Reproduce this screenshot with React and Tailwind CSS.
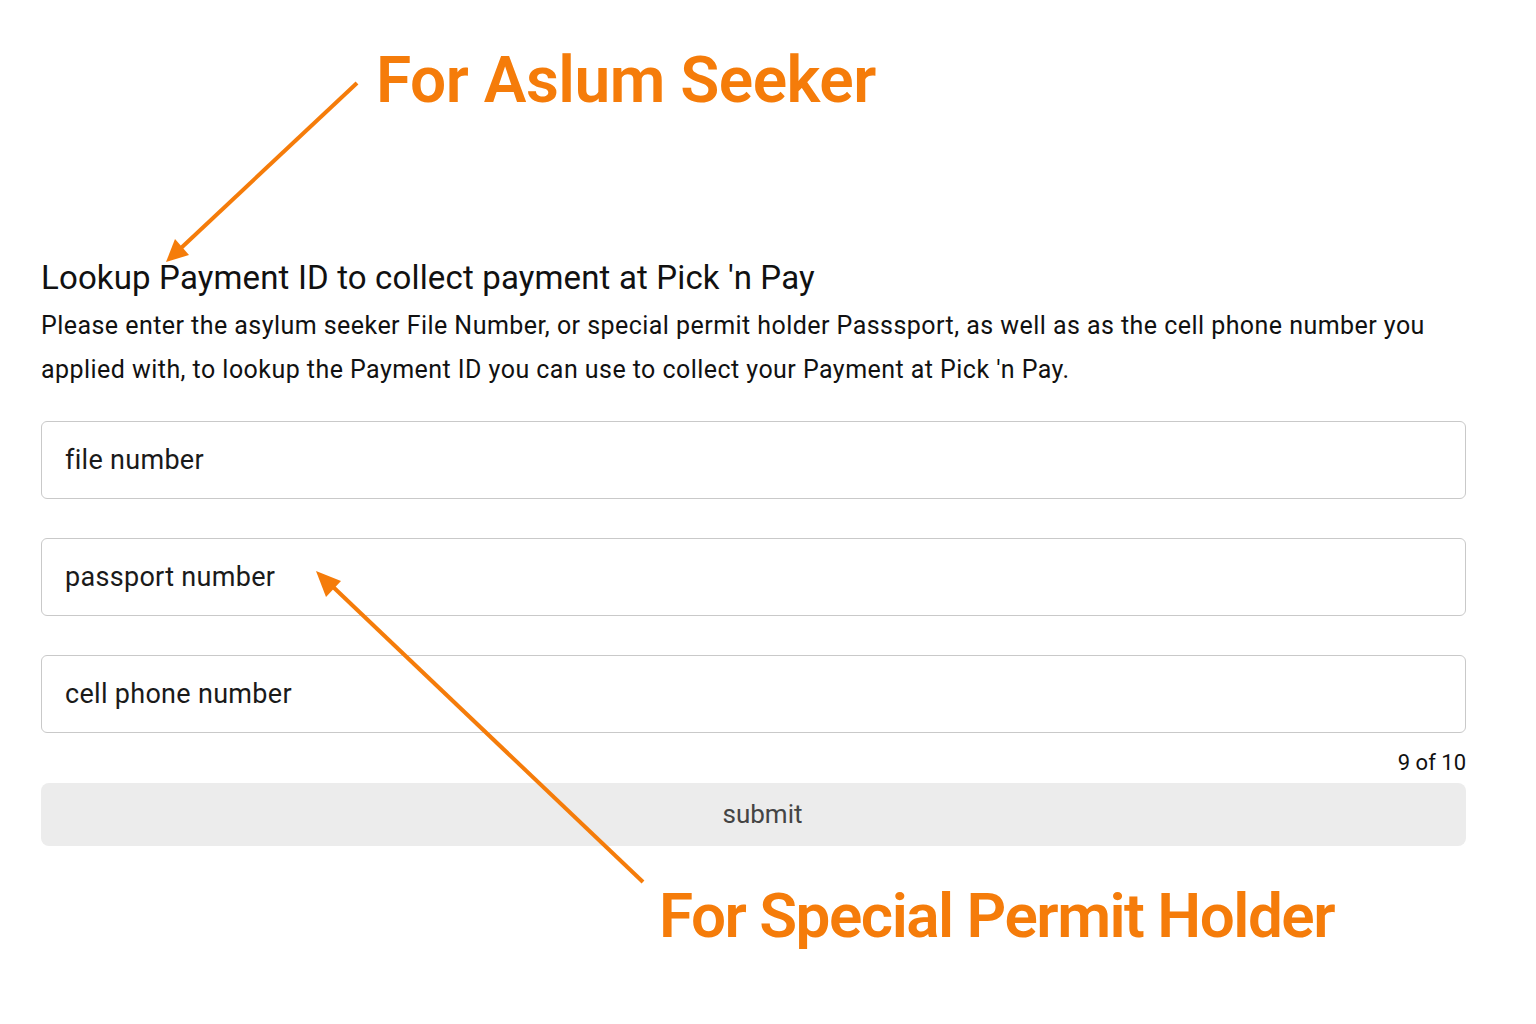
import React from "react";

const ORANGE = "#f57c0a";

const Field = ({ placeholder }) => (
  <input
    type="text"
    placeholder={placeholder}
    className="block w-full h-[78px] rounded-[6px] border border-[#c9c9c9] bg-white px-[23px] text-[27px] tracking-[0.3px] text-[#1a1a1a] placeholder:text-[#1a1a1a] focus:outline-none"
  />
);

const Arrows = () => (
  <svg
    className="absolute inset-0 pointer-events-none"
    width="1536"
    height="1024"
    viewBox="0 0 1536 1024"
  >
    {/* to Payment heading */}
    <line x1="357" y1="83" x2="180" y2="249" stroke={ORANGE} strokeWidth="4" />
    <polygon points="166,262 189,255 175,239" fill={ORANGE} />
    {/* to passport field */}
    <line x1="643" y1="882" x2="330" y2="584" stroke={ORANGE} strokeWidth="4" />
    <polygon points="316,571 341,581 326,597" fill={ORANGE} />
  </svg>
);

export default function App() {
  return (
    <div
      className="relative w-full h-[1024px] overflow-hidden bg-white"
      style={{ fontFamily: "Roboto, 'Liberation Sans', sans-serif" }}
    >
      <div className="pt-[49px] pl-[376px]">
        <h2
          className="text-[64px] leading-none font-semibold tracking-[-0.5px]"
          style={{ color: ORANGE }}
        >
          For Aslum Seeker
        </h2>
      </div>

      <div className="mt-[145px] px-[41px] w-[1507px]">
        <h1 className="text-[33px] leading-[40px] tracking-[0.15px] text-[#111]">
          Lookup Payment ID to collect payment at Pick 'n Pay
        </h1>
        <p className="mt-[6px] text-[25px] leading-[44px] tracking-[0.45px] text-[#111]">
          Please enter the asylum seeker File Number, or special permit holder
          Passsport, as well as as the cell phone number you
          <br />
          applied with, to lookup the Payment ID you can use to collect your
          Payment at Pick 'n Pay.
        </p>

        <div className="mt-[29px] w-[1425px] flex flex-col gap-[39px]">
          <Field placeholder="file number" />
          <Field placeholder="passport number" />
          <Field placeholder="cell phone number" />
        </div>
        <div className="w-[1425px] text-right text-[22px] leading-[30px] text-[#111] mt-[15px]">
          9 of 10
        </div>
        <button
          type="button"
          className="mt-[5px] w-[1425px] h-[63px] rounded-[8px] bg-[#ececec] text-[26px] text-[#444] pl-[18px]"
        >
          submit
        </button>
      </div>

      <div className="mt-[39px] pl-[659px]">
        <h2
          className="text-[62px] leading-none font-semibold tracking-[-1.5px]"
          style={{ color: ORANGE }}
        >
          For Special Permit Holder
        </h2>
      </div>

      <Arrows />
    </div>
  );
}
